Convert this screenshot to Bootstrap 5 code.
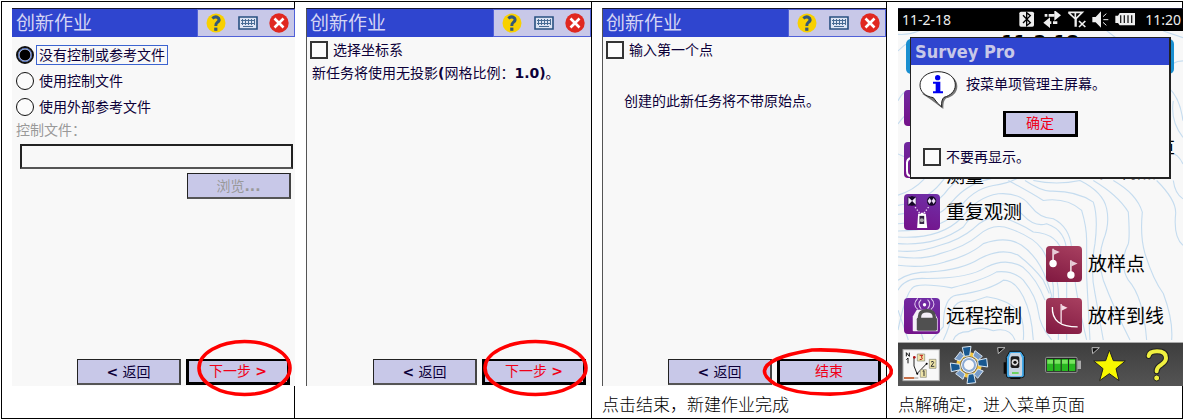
<!DOCTYPE html>
<html lang="zh-CN">
<head>
<meta charset="utf-8">
<meta name="viewport" content="width=device-width, initial-scale=1">
<title>Survey Pro 创新作业</title>
<link href="https://cdn.jsdelivr.net/npm/bootstrap@5.3.0/dist/css/bootstrap.min.css" rel="stylesheet">
<script src="https://cdn.jsdelivr.net/npm/bootstrap@5.3.0/dist/js/bootstrap.bundle.min.js" defer></script>
<style>
:root { --ink:#0c0038; --blue:#2f45cf; --lav:#c8c8e8; --paper:#f8f8f8; }
body { font-family:"DejaVu Sans","Noto Sans CJK SC",sans-serif; font-size:14px; line-height:20px; color:var(--ink); background:#fff; padding:1px 0 0 1px; }
.steps { display:grid; grid-template-columns:293fr 297fr 295fr 297fr; min-height:calc(100vh - 1px); border-top:1px solid #000; border-bottom:1px solid #000; }
.step { border-left:1px solid #000; padding:6px 0 0 11px; min-width:0; }
.step:nth-child(odd) { padding-left:10px; }
.step:last-child { border-right:1px solid #000; }
.device { background:var(--paper); border-top:1px solid #181830; }
.device.lined { border-left:1px solid #555; }
.device.wide { margin-right:-1px; z-index:1; }
.titlebar { height:28px; background:var(--blue); }
.titlebar h2 { font-size:19px; line-height:28px; color:#d4d4f4; font-weight:400; padding-left:4px; }
.lined .titlebar h2 { padding-left:3px; }
.tools { width:98px; background:var(--lav); border:1px solid #5060d8; padding:0 5px 0 8px; }
.tools button, .dock button { border:0; background:none; padding:0; line-height:0; }
.opt { height:26px; padding-left:4px; gap:2px; }
.radios { padding-top:5px; }
.lined .opt { padding-left:3px; }
.opt input { appearance:none; width:18px; height:18px; margin:0; flex:none; border:1px solid #111; background:#fbfbfb; }
.opt input[type=checkbox] { border-width:2px; border-color:#333; }
.opt input[type=radio] { border-radius:50%; }
.opt input[type=radio]:checked { border:2px solid #111; background:radial-gradient(circle,#000 0 5px,#fff 6px); box-shadow:inset 0 0 0 1px #4a70d0; }
.opt label { padding:0 2px; border:1px solid transparent; line-height:18px; white-space:nowrap; }
.opt input[type=radio]:checked + label { border-color:#3c64d0; }
.faded { color:#999; }
.entry { border:2px solid #222; border-bottom-color:#555; background:var(--paper); height:25px; margin:0 2px 0 8px; }
.hint { padding-left:5px; }
.hint.inset-hint { padding:28px 0 0 21px; }
.key { width:104px; height:26px; background:var(--lav); border:1px solid #222; border-right:2px solid #444; border-bottom:2px solid #555; color:var(--ink); padding:0; line-height:20px; text-align:center; }
.key.main { border:3px solid #000; border-top-width:2px; color:#f00018; line-height:19px; }
.key.small-key { width:75px; height:26px; }
.key:disabled { color:#999; }
.actions { gap:5px; padding:0 5px 1px 0; }
.ring { position:absolute; left:11px; top:-20px; width:95px; height:59px; overflow:visible; pointer-events:none; }
.ring.mid { left:1px; width:105px; }
.ring.low { left:-14px; top:-11px; width:131px; height:49px; }
.note { height:32px; line-height:36px; font-size:17px; font-weight:300; color:#000; font-family:"Noto Sans CJK SC",sans-serif; margin:0; white-space:nowrap; }
.statusbar { height:22px; background:#000; color:#eee; padding:0 2px 0 4px; font:14px/22px "Noto Sans","Noto Sans CJK SC",sans-serif; }
.contours { position:absolute; inset:0; width:100%; height:100%; }
.home { position:relative; flex-grow:1; color:#000; }
.banner { position:relative; height:35px; margin:8px 9px 8px 8px; border-radius:5px; background:#1a8fd0; }
.banner strong { position:absolute; inset:-7px 0 auto 0; font-size:18px; text-align:center; }
.apps { position:relative; display:grid; grid-template-columns:142fr 137fr; grid-auto-rows:52px; padding-left:6px; font-size:19px; line-height:22px; }
.app { color:#000; text-decoration:none; gap:6px; min-width:0; white-space:nowrap; }
.low-label { padding-top:32px; line-height:18px; }
.tile { width:36px; height:36px; flex:none; border-radius:4px; background:linear-gradient(200deg,#7030a8,#741088); }
.tile.wine { background:linear-gradient(200deg,#a84060,#801840); }
.notice { position:absolute; left:12px; right:12px; top:6px; background:var(--paper); border:1px solid #222; border-right-width:2px; border-bottom-width:2px; color:var(--ink); }
.notice h3 { font:bold 18px/28px "DejaVu Sans Condensed","DejaVu Sans",sans-serif; height:27px; color:var(--lav); background:var(--blue); padding-left:4px; margin:0; }
.notice-body { padding:5px 8px 7px; }
.dismiss { margin-top:7px; }
.dock { position:relative; height:44px; background:linear-gradient(#3e3e3e,#545454); border-top:1px solid #aaa; }
</style>
</head>
<body>
<svg width="0" height="0" class="position-absolute" aria-hidden="true">
  <symbol id="i-help" viewBox="0 0 20 20"><circle cx="10" cy="10" r="9.5" fill="#f8d000"/><path d="M6.3 5.4Q10 2.5 12.6 5.2Q14 8.2 11 9.7Q9.8 10.4 9.8 13" fill="none" stroke="#345878" stroke-width="3"/><rect x="8.2" y="14.6" width="3.2" height="3.2" fill="#345878"/></symbol>
  <symbol id="i-keys" viewBox="0 0 20 14"><path d="M1 1h18v12H1z" fill="#dde4f4" stroke="#285080" stroke-width="1.6"/><path d="M3 4.5h14M3 7.5h14M4.5 3v6M7.5 3v6M10.5 3v6M13.5 3v6M16.5 3v6M5 10.5h10" stroke="#486c94" stroke-width="1"/></symbol>
  <symbol id="i-close" viewBox="0 0 20 20"><circle cx="10" cy="10" r="9.7" fill="#e02820"/><path d="M5.5 5.5l9 9m0-9l-9 9" stroke="#fff" stroke-width="2.6"/></symbol>
</svg>

<main class="steps">
  <section class="step d-flex flex-column">
    <div class="device wide d-flex flex-column flex-grow-1">
      <header class="titlebar d-flex justify-content-between">
        <h2 class="m-0">创新作业</h2>
        <div class="tools d-flex align-items-center justify-content-between">
          <button type="button" aria-label="帮助"><svg width="20" height="20"><use href="#i-help"/></svg></button>
          <button type="button" aria-label="键盘"><svg width="20" height="14"><use href="#i-keys"/></svg></button>
          <button type="button" aria-label="关闭"><svg width="20" height="20"><use href="#i-close"/></svg></button>
        </div>
      </header>
      <form class="radios d-flex flex-column flex-grow-1">
        <div class="opt d-flex align-items-center"><input type="radio" name="src" id="r1" checked><label for="r1">没有控制或参考文件</label></div>
        <div class="opt d-flex align-items-center"><input type="radio" name="src" id="r2"><label for="r2">使用控制文件</label></div>
        <div class="opt d-flex align-items-center"><input type="radio" name="src" id="r3"><label for="r3">使用外部参考文件</label></div>
        <label class="faded ps-1 pb-1" for="file">控制文件：</label>
        <input class="entry" id="file" type="text">
        <div class="d-flex justify-content-end pt-1 pe-1"><button type="button" class="key" disabled>浏览<b>...</b></button></div>
        <div class="actions d-flex justify-content-end mt-auto">
          <button type="button" class="key"><b>&lt;</b> 返回</button>
          <div class="position-relative"><button type="button" class="key main">下一步 <b>&gt;</b></button>
            <svg class="ring" viewBox="0 0 95 59"><ellipse cx="47.5" cy="29" rx="45.5" ry="26.5" fill="none" stroke="#f00" stroke-width="3.6"/></svg></div>
        </div>
      </form>
    </div>
    <p class="note"></p>
  </section>

  <section class="step d-flex flex-column">
    <div class="device lined d-flex flex-column flex-grow-1">
      <header class="titlebar d-flex justify-content-between">
        <h2 class="m-0">创新作业</h2>
        <div class="tools d-flex align-items-center justify-content-between">
          <button type="button" aria-label="帮助"><svg width="20" height="20"><use href="#i-help"/></svg></button>
          <button type="button" aria-label="键盘"><svg width="20" height="14"><use href="#i-keys"/></svg></button>
          <button type="button" aria-label="关闭"><svg width="20" height="20"><use href="#i-close"/></svg></button>
        </div>
      </header>
      <form class="d-flex flex-column flex-grow-1">
        <div class="opt d-flex align-items-center"><input type="checkbox" id="c1"><label for="c1">选择坐标系</label></div>
        <p class="hint m-0 text-nowrap">新任务将使用无投影<b>(</b>网格比例：<b>1.0)</b>。</p>
        <div class="actions d-flex justify-content-end mt-auto">
          <button type="button" class="key"><b>&lt;</b> 返回</button>
          <div class="position-relative"><button type="button" class="key main">下一步 <b>&gt;</b></button>
            <svg class="ring mid" viewBox="0 0 105 59"><ellipse cx="52.5" cy="29" rx="50.5" ry="26.5" fill="none" stroke="#f00" stroke-width="3.6"/></svg></div>
        </div>
      </form>
    </div>
    <p class="note"></p>
  </section>

  <section class="step d-flex flex-column">
    <div class="device lined d-flex flex-column flex-grow-1">
      <header class="titlebar d-flex justify-content-between">
        <h2 class="m-0">创新作业</h2>
        <div class="tools d-flex align-items-center justify-content-between">
          <button type="button" aria-label="帮助"><svg width="20" height="20"><use href="#i-help"/></svg></button>
          <button type="button" aria-label="键盘"><svg width="20" height="14"><use href="#i-keys"/></svg></button>
          <button type="button" aria-label="关闭"><svg width="20" height="20"><use href="#i-close"/></svg></button>
        </div>
      </header>
      <form class="d-flex flex-column flex-grow-1">
        <div class="opt d-flex align-items-center"><input type="checkbox" id="c2"><label for="c2">输入第一个点</label></div>
        <p class="hint inset-hint m-0 text-nowrap">创建的此新任务将不带原始点。</p>
        <div class="actions d-flex justify-content-end mt-auto">
          <button type="button" class="key"><b>&lt;</b> 返回</button>
          <div class="position-relative"><button type="button" class="key main">结束</button>
            <svg class="ring low" viewBox="0 0 131 49"><path d="M49 2Q88 1 112 9Q142 22 117 35Q95 47 62 46Q32 46 12 36Q-10 22 14 11Q25 6 49 2z" fill="none" stroke="#f00" stroke-width="3.6"/></svg></div>
        </div>
      </form>
    </div>
    <p class="note">点击结束，新建作业完成</p>
  </section>

  <section class="step d-flex flex-column">
    <div class="device wide d-flex flex-column flex-grow-1">
      <div class="statusbar d-flex justify-content-between">
        <span>11-2-18</span>
        <div class="d-flex align-items-center gap-1">
          <svg width="122" height="18" viewBox="397 37 366 54">
            <rect x="398" y="39" width="44" height="45" rx="5" fill="#eee"/><path d="M409 50l22 22-11 9V42l11 9-22 22" fill="none" stroke="#000" stroke-width="4"/>
            <path d="M474 50h8M486 72h8M499 72h13M486 50h18" stroke="#eee" stroke-width="8"/><path d="M503 34l20 16-20 16zM490 56l-20 16 20 16z" fill="#eee"/>
            <path d="M545 41h42L568 60v24M545 41l21 20M566 41v43M577 67l19 18m0-18l-19 18" fill="none" stroke="#eee" stroke-width="5"/>
            <path d="M617 55h10l16-17v49l-16-16h-10z" fill="#eee"/><path d="M649 54l10-9M650 63h15M649 71l10 9" stroke="#eee" stroke-width="3"/>
            <path d="M699 43h46v37h-46l-5-7h-8V51h8z" fill="#eee"/><path d="M702 50v23M713 50v23M724 50v23M735 50v23" stroke="#222" stroke-width="4"/>
          </svg>
          <span>11:20</span>
        </div>
      </div>
      <div class="home">
        <svg class="contours" viewBox="898 30 285 312" preserveAspectRatio="none" fill="none" stroke="#c5dcef" stroke-width="3.4">
          <g transform="translate(890 180) scale(.3333)">
            <path d="M24 44Q70 30 100-2L150-60L190-90M24 75Q110 60 150 10T230-70M24 102Q130 90 175 25L220-20L300-60M24 130Q140 125 185 65Q230 10 300-5Q350-18 400-60M24 152Q150 150 200 95Q245 25 310 15Q350 10 380-5M24 170Q150 178 215 112Q260 50 325 40Q390 35 420 75T490 115Q540 140 545 205"/>
            <path d="M24 190Q140 198 220 140Q260 80 320 72Q365 68 400 105T470 130Q530 150 530 220M24 212Q90 218 150 195Q210 178 250 145Q300 95 350 115T430 155Q510 160 520 230M24 230Q100 240 150 220Q225 200 265 165Q310 125 360 145Q430 170 455 205T490 320V360"/>
            <path d="M24 255Q100 265 165 245Q240 225 280 190Q350 165 395 195Q445 230 470 300T480 350M24 300Q60 275 120 275Q215 270 270 235Q335 200 385 225Q430 260 460 300L478 340M24 330Q45 290 110 295Q240 295 290 260Q350 230 400 262Q440 295 465 360M24 450Q50 320 78 317Q110 310 185 323Q280 300 320 275Q370 270 400 300Q440 350 445 395T485 480"/>
            <path d="M24 390L55 480M50 370Q85 420 100 480M125 480L160 440Q160 350 200 345Q300 330 340 300Q375 300 400 350T430 480M160 480Q180 440 188 390Q200 355 245 365L290 350Q355 360 380 390Q405 415 400 480M190 480Q200 455 235 455Q270 435 310 452Q360 440 375 480"/>
            <path d="M355 0Q420 35 460 60Q530 50 575 90Q590 140 590 180T590 290L600 480M405 0Q450 30 480 32Q560 30 610 65Q625 110 615 190Q600 270 615 340L640 480M430 0Q500 15 570 0Q640 35 650 85Q660 130 640 180Q620 240 640 300Q670 380 720 480"/>
            <path d="M610 0Q685 45 715 95Q720 170 715 190Q685 250 715 300Q760 350 770 480M850 0Q855 40 879 55M800 0Q860 60 857 100Q850 170 879 195M670 0Q740 40 757 95Q750 170 765 220Q790 300 820 340Q850 420 845 480M500 300Q510 330 505 480M530 300V480M555 300Q560 350 590 480"/>
            <path d="M24-440Q90-435 140-490M24-390Q44-410 64-420M24-240Q45-280 60-260M24-170Q45-200 64-210M24-80Q50-70 64-60M830-330Q845-360 879-360M835-280Q870-250 879-180M850-240Q840-180 879-130M830-80Q860-90 879-50M820-450L879-430M600-490L690-420M180 0Q215-50 270-70M230 10L300-60"/>
          </g>
        </svg>
        <div class="banner"><strong>11-2-18</strong></div>
        <nav class="apps">
          <a class="app d-flex align-items-center" href="#" aria-label="测量"><span class="tile"></span></a>
          <span></span>
          <a class="app d-flex align-items-center" href="#"><svg class="tile" viewBox="0 0 36 36"><path d="M7 34q-4 0-4-5v-8q0-4 4-5" fill="none" stroke="#fff" stroke-width="2"/></svg><span class="low-label">测量</span></a>
          <a class="app d-flex align-items-center justify-content-end pe-2" href="#"><span>坐标计算<br>控制点</span></a>
          <a class="app d-flex align-items-center" href="#">
            <svg class="tile" viewBox="42 39 107 107"><path d="M53 47h25v26H53z" fill="#160828"/><path d="M55 49l11 10 11-10v22L66 60 55 71z" fill="#f4eaff"/><path d="M62 46l4 12 4-12zM62 73l4-12 4 12z" fill="#160828"/><circle cx="124" cy="60" r="14" fill="#160828"/><path d="M112 60l6-9 6 9 6-9 6 9-6 9-6-9-6 9z" fill="#e8d8f4"/><path d="M75 78l15 20M115 78l-15 20" stroke="#eadcf4" stroke-width="4" stroke-dasharray="4 5"/><path d="M84 98h23l4 42H81z" fill="#fff"/><rect x="88" y="104" width="14" height="24" fill="#302040"/><circle cx="95" cy="117" r="6" fill="#aaa"/><path d="M92 95h8v5h-8z" fill="#fff"/></svg>
            <span>重复观测</span></a>
          <span></span>
          <span></span>
          <a class="app d-flex align-items-center" href="#">
            <svg class="tile wine" viewBox="469 194 107 107"><path d="M490 244v-42M543 278v-42" stroke="#fff" stroke-width="4"/><path d="M491 204l19 8-19 9zM544 238l19 8-19 9z" fill="#e8cdd8"/><circle cx="490" cy="246" r="11" fill="#fff"/><circle cx="543" cy="280" r="11" fill="#fff"/></svg>
            <span>放样点</span></a>
          <a class="app d-flex align-items-center" href="#">
            <svg class="tile" viewBox="42 349 107 107"><path d="M68 446v-42l12-20h44l12 15 6 12v37H70z" fill="#f4eef8"/><path d="M93 354q-13 12 0 27M83 350q-18 18 0 33M112 354q13 12 0 27M122 350q18 18 0 33" fill="none" stroke="#e4cff0" stroke-width="3"/><circle cx="103" cy="369" r="5" fill="#fff"/><path d="M88 412v-7q0-18 22-18t22 18v7" fill="none" stroke="#505050" stroke-width="10"/><rect x="80" y="408" width="60" height="38" rx="4" fill="#505050"/></svg>
            <span>远程控制</span></a>
          <a class="app d-flex align-items-center" href="#">
            <svg class="tile wine" viewBox="469 349 107 107"><path d="M488 376Q485 435 563 435" fill="none" stroke="#fff" stroke-width="4"/><path d="M514 424v-57" stroke="#f4dde6" stroke-width="4"/><path d="M515 370l18 8-18 9z" fill="#f4dde6"/></svg>
            <span>放样到线</span></a>
        </nav>
        <div class="notice" role="dialog" aria-labelledby="nt">
          <h3 id="nt">Survey Pro</h3>
          <div class="notice-body d-flex flex-column">
            <div class="d-flex gap-2">
              <svg width="39" height="41" viewBox="89 216 117 123"><path d="M148 225c34 0 56 17 56 40 0 20-16 32-33 36q-10 6-9 32l-36-27-27-18z" fill="#777"/><path d="M146 221c31 0 52 17 52 40 0 19-15 32-34 37q-9 8-7 29-13-10-25-28c-25-4-40-18-40-38 0-22 22-40 54-40z" fill="#fff" stroke="#222" stroke-width="3"/><circle cx="145" cy="239" r="8" fill="#0000f0"/><path d="M131 251h22v29h8v6h-30v-6h8v-23h-8z" fill="#0000f0"/></svg>
              <p class="m-0 pt-1 text-nowrap">按菜单项管理主屏幕。</p>
            </div>
            <button type="button" class="key main small-key align-self-center">确定</button>
            <div class="opt dismiss d-flex align-items-center"><input type="checkbox" id="c3"><label for="c3">不要再显示。</label></div>
          </div>
        </div>
      </div>
      <nav class="dock d-flex justify-content-between" aria-label="工具">
        <button type="button" aria-label="地图"><svg width="47" height="43" viewBox="24 25 141 129"><rect x="39" y="45" width="109" height="93" fill="#f8f8f8" stroke="#aaa" stroke-width="3"/><path d="M49 65V54l9 11V54M54 86V70l-5 5" fill="none" stroke="#111" stroke-width="3"/><path d="M72 68v26l9 23 29-30" fill="none" stroke="#222" stroke-width="3"/><path d="M82 58h22v21H82zM118 74h20v27h-20zM91 105h18v23H91z" fill="#eee4a8" stroke="#887" stroke-width="2"/><path d="M89 62h9l-4 5q8 7-5 8" fill="none" stroke="#c01818" stroke-width="3"/><path d="M123 82q8-5 8 2l-8 11h10M98 110l4-2v16" fill="none" stroke="#333" stroke-width="3"/><path d="M42 130h31" stroke="#c87048" stroke-width="6"/><path d="M73 130h12" stroke="#bbb" stroke-width="5"/><circle cx="73" cy="68" r="4" fill="#b01010"/><circle cx="82" cy="117" r="3"/><circle cx="110" cy="87" r="3"/></svg></button>
        <button type="button" aria-label="设置"><svg width="47" height="43" viewBox="166 25 141 129"><defs><path id="tooth" d="M-20-53L6-56 2-28-14-26z" fill="#185890" stroke="#dce8f4" stroke-width="3"/><path id="pad" d="M18-43L40-26 28-15 12-27z" fill="#789cc8" stroke="#dce8f4" stroke-width="3"/></defs><g transform="translate(235 91)"><circle r="32" fill="none" stroke="#f4c63c" stroke-width="12"/><circle r="24" fill="#f8f8f8"/><use href="#tooth"/><use href="#tooth" transform="rotate(90)"/><use href="#tooth" transform="rotate(180)"/><use href="#tooth" transform="rotate(270)"/><use href="#pad"/><use href="#pad" transform="rotate(90)"/><use href="#pad" transform="rotate(180)"/><use href="#pad" transform="rotate(270)"/><circle r="18" fill="#f8f8f8" stroke="#8aaad4" stroke-width="6"/></g></svg></button>
        <button type="button" aria-label="仪器"><svg width="47" height="43" viewBox="308 25 141 129"><path d="M322 39h22l-20 18z" fill="#111" stroke="#bbb" stroke-width="3"/><path d="M340 83h9v34h-9zM360 122h30v11h-30z" fill="#080808"/><path d="M358 50h34l10 15v57q0 7-8 7h-40q-6 0-6-8V68z" fill="#42a8e8" stroke="#111" stroke-width="3"/><path d="M361 55h28l6 15v50q0 5-5 5h-28q-6 0-6-6V69z" fill="#c8d4e0"/><rect x="361" y="65" width="26" height="35" rx="5" fill="#1c1c1c"/><circle cx="374" cy="83" r="10" fill="#ddd"/><circle cx="374" cy="83" r="5" fill="#111"/><path d="M365 115h20" stroke="#40d020" stroke-width="4"/></svg></button>
        <button type="button" aria-label="电池"><svg width="47" height="43" viewBox="450 25 141 129"><rect x="464" y="68" width="94" height="45" rx="3" fill="#202820" stroke="#999" stroke-width="3"/><path d="M559 78h11v25h-11z" fill="#aaa"/><path d="M468 73h19v36h-19zM490 73h19v36h-19zM512 73h19v36h-19zM534 73h19v36h-19z" fill="#28b820"/><path d="M469 76h17v11h-17zM491 76h17v11h-17zM513 76h17v11h-17zM535 76h17v11h-17z" fill="#78e460"/></svg></button>
        <button type="button" aria-label="收藏"><svg width="47" height="43" viewBox="592 25 141 129"><path d="M604 39h22l-20 18z" fill="#111" stroke="#bbb" stroke-width="3"/><path d="M656 46l12 32 36 1-28 23 9 36-29-21-29 21 10-36-28-23 36-1z" fill="#f8f800" stroke="#222" stroke-width="3"/></svg></button>
        <button type="button" aria-label="帮助"><svg width="47" height="43" viewBox="734 25 141 129"><path d="M772 64q2-14 25-14 27 0 27 20 0 11-14 20-14 8-14 20" fill="none" stroke="#222" stroke-width="18" stroke-linecap="round"/><path d="M772 64q2-14 25-14 27 0 27 20 0 11-14 20-14 8-14 20" fill="none" stroke="#f0f040" stroke-width="12" stroke-linecap="round"/><circle cx="796" cy="130" r="9" fill="#f0f040" stroke="#222" stroke-width="3"/></svg></button>
      </nav>
    </div>
    <p class="note">点解确定，进入菜单页面</p>
  </section>
</main>
</body>
</html>
